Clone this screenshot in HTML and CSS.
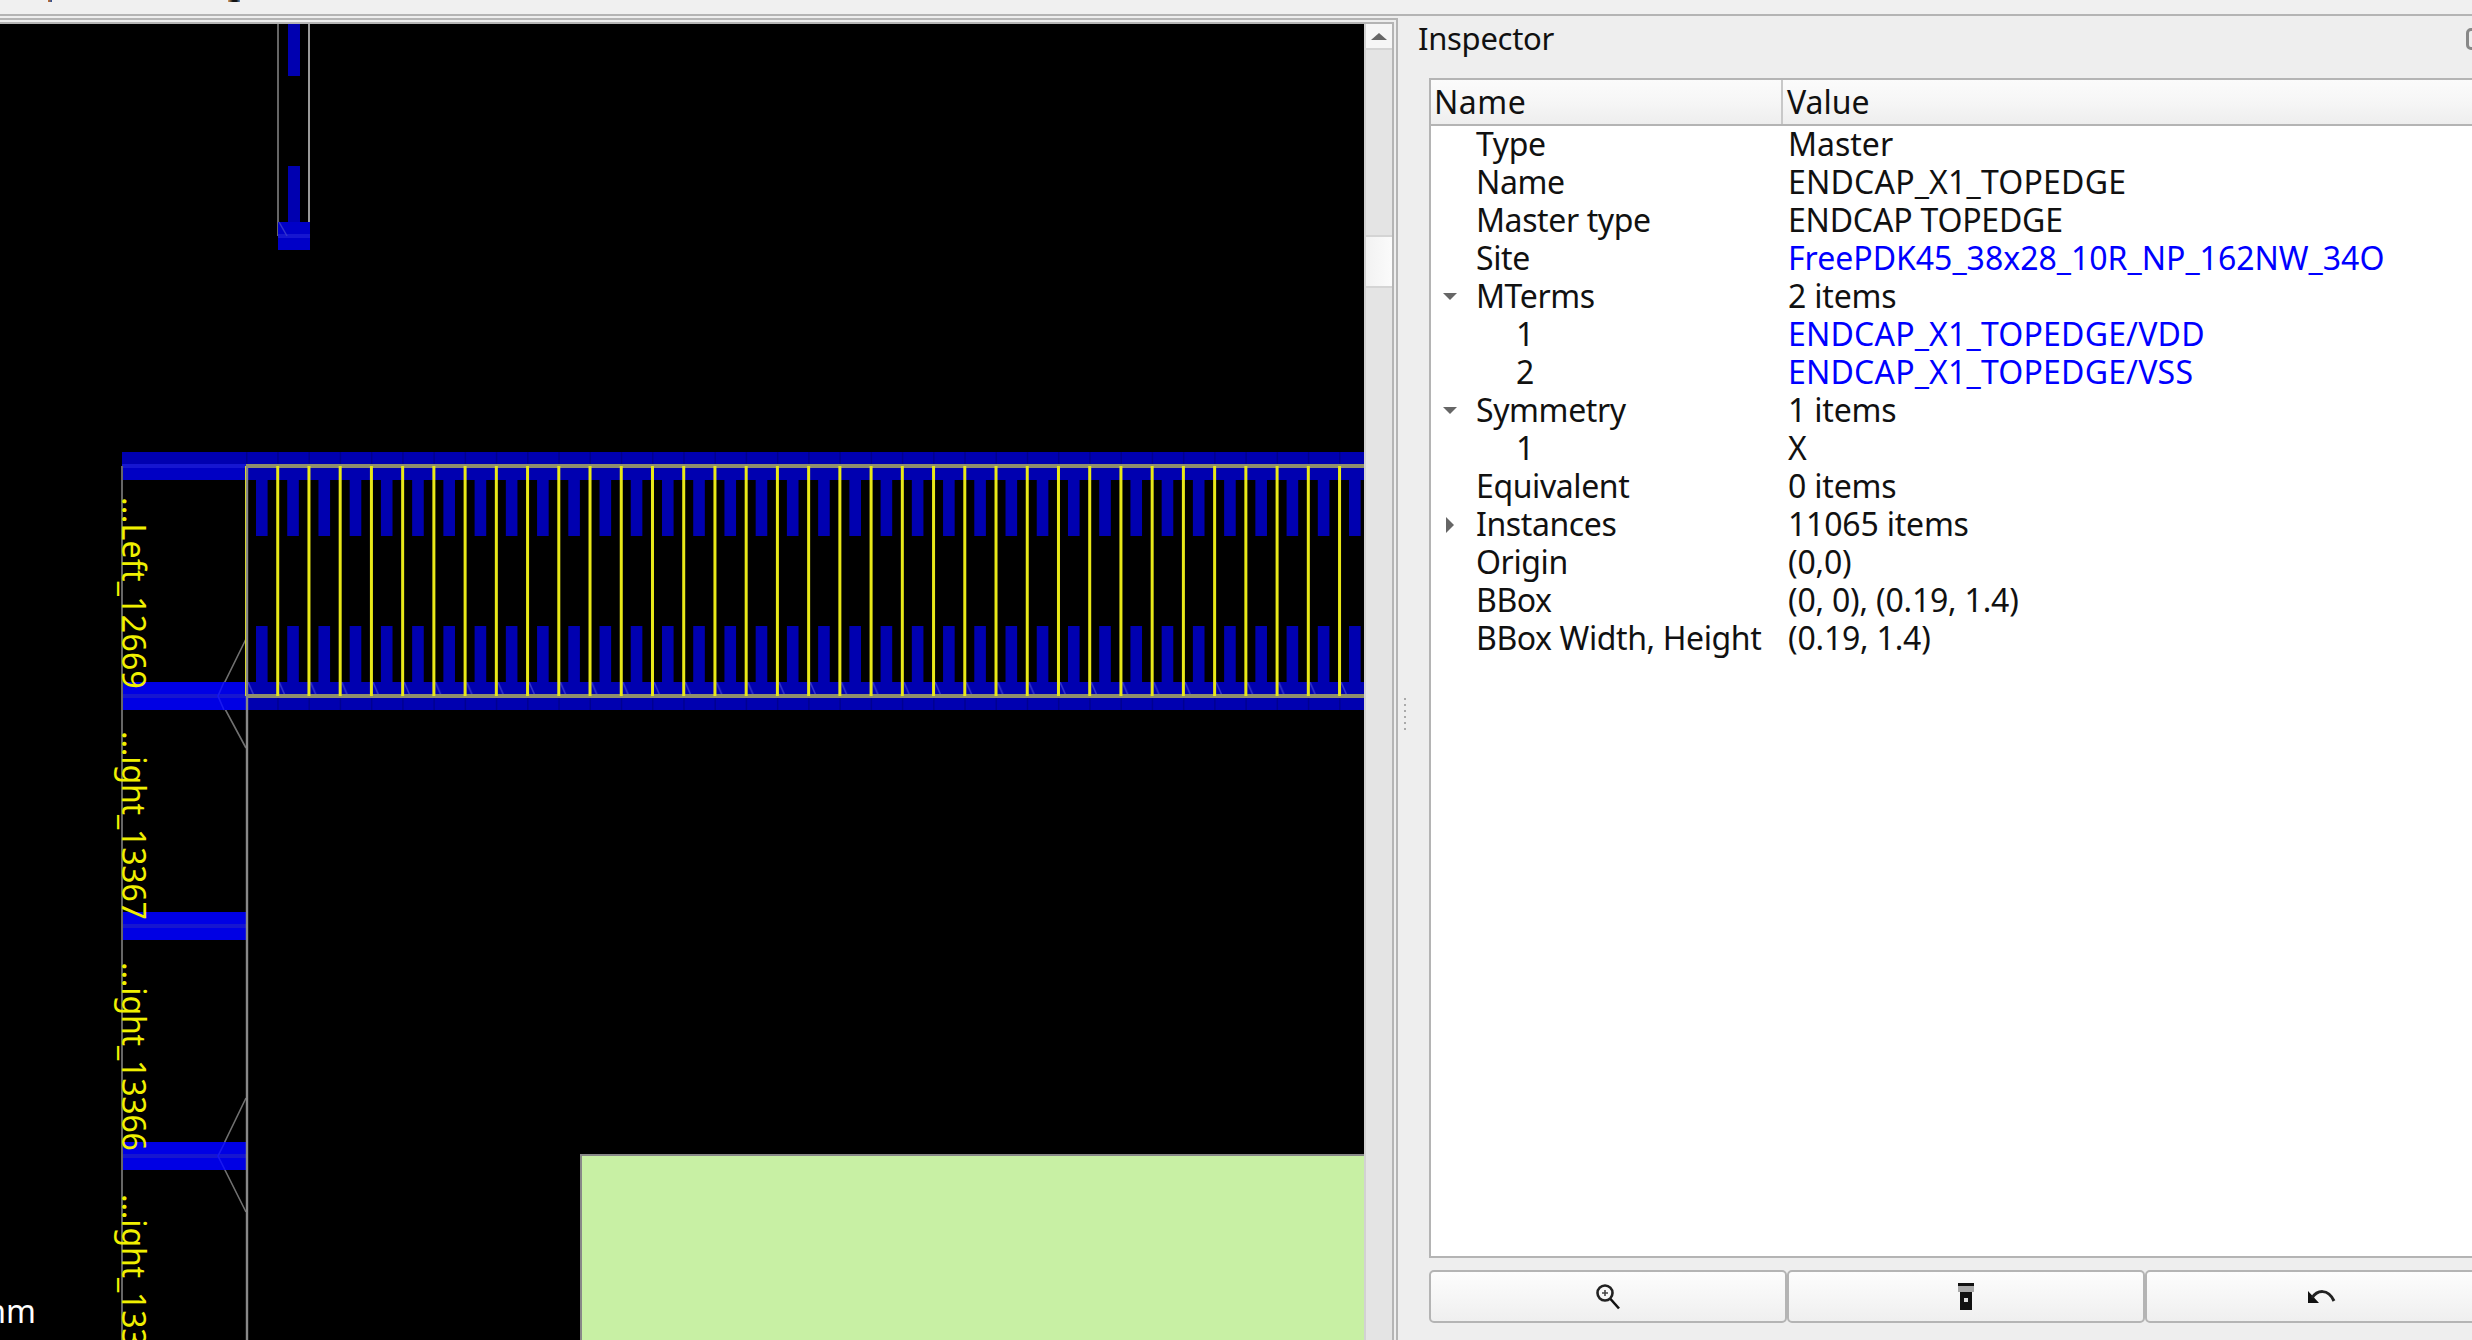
FILE: index.html
```html
<!DOCTYPE html>
<html lang="en">
<head>
  <meta charset="UTF-8">
  <title>Inspector</title>
  <link rel="stylesheet" href="styles.css">
</head>
<body>

  <div class="menu-strip">
    <span class="menu-mark mark-a"></span>
    <span class="menu-mark mark-b"></span>
  </div>

  <div class="workspace">
    <div class="view-frame">
      <div class="view-inner">
        <div class="view-core">
          <div class="canvas">
            <svg class="layout" width="1364" height="1316" viewBox="0 24 1364 1316">
              <!-- tall cell at the top -->
              <rect class="m1" x="288" y="24" width="12" height="52"/>
              <rect class="m1" x="288" y="166" width="12" height="56"/>
              <path class="outline-dark" d="M278 24V236"/>
              <path class="outline" d="M309 24V236"/>
              <rect class="m1-bright" x="278" y="222" width="32" height="28"/>
              <rect class="m1-band" x="278" y="234" width="32" height="4"/>
              <path class="faint" d="M279 222L287 236"/>

              <!-- pin marks sit under the metal -->
              <path class="pin" d="M246 639L218 696L246 748"/>
              <path class="pin" d="M246 1098L218 1156L246 1212"/>

              <!-- power rails, left stub -->
              <rect class="m1" x="122" y="452" width="1242" height="28"/>
              <rect class="m1-mid" x="122" y="466" width="124" height="14"/>
              <rect class="m1-band" x="122" y="464" width="124" height="4"/>
              <rect class="m1" x="122" y="682" width="1242" height="28"/>
              <rect class="m1-lit" x="122" y="682" width="124" height="28"/>
              <rect class="m1-band" x="122" y="694" width="124" height="4"/>
              <rect class="m1-lit" x="122" y="912" width="124" height="28"/>
              <rect class="m1-band" x="122" y="924" width="124" height="4"/>
              <rect class="m1-lit" x="122" y="1142" width="124" height="28"/>
              <rect class="m1-band" x="122" y="1154" width="124" height="4"/>
              <path class="pin-over" d="M224 682L218 696L224 710"/>
              <path class="pin-over" d="M225 1142L218 1156L225 1170"/>

              <!-- repeated endcap cells -->
              <path class="seam" d="M246 466H1364"/>
              <path class="seam" d="M246 696H1364"/>
              <path class="fingers" d="M256 508H1364"/>
              <path class="fingers" d="M256 654H1364"/>
              <rect x="246" y="682" width="1118" height="14" fill="url(#tick)"/>
              <path class="rail-line" d="M246 466H1364M246 696H1364"/>
              <path class="cell-lines" d="M245 581H1364"/>

              <defs>
                <pattern id="tick" x="247" y="682" width="31.23" height="14" patternUnits="userSpaceOnUse">
                  <path class="faint" d="M1 0L7 14"/>
                </pattern>
              </defs>

              <!-- boundary -->
              <path class="boundary-left" d="M122 466V1340"/>
              <path class="boundary" d="M247 466V1340"/>
              <rect class="macro" x="581" y="1155" width="790" height="190"/>

              <text class="label left" transform="translate(122,497) rotate(90)">...Left_12669</text>
              <text class="label" transform="translate(122,731) rotate(90)">...ight_13367</text>
              <text class="label" transform="translate(122,962) rotate(90)">...ight_13366</text>
              <text class="label" transform="translate(122,1194) rotate(90)">...ight_13365</text>
              <text class="scale" x="36" y="1323" text-anchor="end">nm</text>
            </svg>
          </div>
          <div class="scrollbar">
            <div class="scroll-btn"><span class="scroll-arrow"></span></div>
            <div class="scroll-track"></div>
            <div class="scroll-handle"></div>
            <div class="scroll-track"></div>
          </div>
        </div>
      </div>
    </div>

    <section class="inspector">
      <div class="dock-title">
        <span>Inspector</span>
        <span class="dock-icon"></span>
      </div>

      <div class="tree">
        <div class="tree-head">
          <div class="head-name">Name</div>
          <div class="head-value">Value</div>
        </div>
        <div class="row"><div class="name">Type</div><div class="value">Master</div></div>
        <div class="row"><div class="name">Name</div><div class="value wide">ENDCAP_X1_TOPEDGE</div></div>
        <div class="row"><div class="name">Master type</div><div class="value tight">ENDCAP TOPEDGE</div></div>
        <div class="row"><div class="name">Site</div><div class="value link">FreePDK45_38x28_10R_NP_162NW_34O</div></div>
        <div class="row"><div class="name"><span class="caret open"></span>MTerms</div><div class="value tight">2 items</div></div>
        <div class="row"><div class="name child">1</div><div class="value link wide">ENDCAP_X1_TOPEDGE/VDD</div></div>
        <div class="row"><div class="name child">2</div><div class="value link wide">ENDCAP_X1_TOPEDGE/VSS</div></div>
        <div class="row"><div class="name"><span class="caret open"></span>Symmetry</div><div class="value tight">1 items</div></div>
        <div class="row"><div class="name child">1</div><div class="value">X</div></div>
        <div class="row"><div class="name">Equivalent</div><div class="value tight">0 items</div></div>
        <div class="row"><div class="name"><span class="caret closed"></span>Instances</div><div class="value tight">11065 items</div></div>
        <div class="row"><div class="name">Origin</div><div class="value tight">(0,0)</div></div>
        <div class="row"><div class="name">BBox</div><div class="value tight">(0, 0), (0.19, 1.4)</div></div>
        <div class="row"><div class="name">BBox Width, Height</div><div class="value tight">(0.19, 1.4)</div></div>
      </div>

      <div class="actions">
        <button class="tool-btn" aria-label="Zoom to">
          <svg width="30" height="30" viewBox="0 0 30 30">
            <circle cx="12" cy="11" r="7.5" fill="none" stroke="#222" stroke-width="2.6"/>
            <path d="M12 8v6M9 11h6" stroke="#444" stroke-width="1.6"/>
            <path d="M17.5 17l8.5 9.5" stroke="#111" stroke-width="2.6"/>
          </svg>
        </button>
        <button class="tool-btn" aria-label="Highlight">
          <svg width="30" height="30" viewBox="0 0 30 30">
            <rect x="7" y="1" width="16" height="3" fill="#111"/>
            <rect x="7" y="4" width="16" height="6" fill="#aaa"/>
            <rect x="9" y="10" width="12" height="18" fill="#111"/>
            <rect x="13" y="16" width="4" height="4" fill="#ddd"/>
          </svg>
        </button>
        <button class="tool-btn undo" aria-label="Undo">
          <svg width="30" height="30" viewBox="0 0 30 30">
            <path d="M0 9V21H11z" fill="#111"/>
            <path d="M4 16C9 8 20 6 26 19" fill="none" stroke="#222" stroke-width="3"/>
          </svg>
        </button>
      </div>
    </section>
  </div>

</body>
</html>
```

FILE: styles.css
```css
:root {
  --panel: #eeeeee;
  --line: #b4b4b4;
  --font: "Noto Sans", sans-serif;
}
* { box-sizing: border-box; margin: 0; padding: 0; }
html, body { height: 100%; overflow: hidden; background: var(--panel); font: 32px/38px var(--font); color: #111; }
body { display: flex; flex-direction: column; }

.menu-strip { height: 16px; flex: none; background: #f0f0f0; border-bottom: 2px solid var(--line); display: flex; gap: 176px; padding-left: 48px; }
.menu-mark { height: 2px; display: block; }
.mark-a { width: 4px; background: linear-gradient(90deg, #d8701c, #1a50a8); }
.mark-b { width: 12px; background: linear-gradient(90deg, #e0a060, #111 40%, #111 70%, #6090c8); }

.workspace { flex: 1; display: flex; min-height: 0; }

/* left: layout view in two nested frames */
.view-frame { width: 1398px; flex: none; padding-top: 2px; }
.view-inner { height: 100%; border-top: 2px solid var(--line); border-right: 2px solid var(--line); padding: 2px 2px 0 0; }
.view-core { height: 100%; display: flex; border-top: 2px solid var(--line); border-right: 2px solid var(--line); }
.canvas { flex: 1; min-width: 0; background: #000; overflow: hidden; }
.layout { display: block; }
.scrollbar { width: 28px; flex: none; display: flex; flex-direction: column; background: #e4e4e4; border-left: 2px solid #d2d2d2; }
.scroll-btn { height: 26px; flex: none; background: #f6f6f6; border-bottom: 2px solid #d4d4d4; display: flex; align-items: center; justify-content: center; }
.scroll-arrow { width: 0; height: 0; border-left: 8px solid transparent; border-right: 8px solid transparent; border-bottom: 7px solid #666; }
.scroll-track { background: #e4e4e4; }
.scroll-track:nth-child(2) { height: 185px; flex: none; }
.scroll-track:last-child { flex: 1; }
.scroll-handle { height: 53px; flex: none; background: linear-gradient(90deg, #f2f2f2, #fbfbfb); border-top: 2px solid #d4d4d4; border-bottom: 2px solid #d4d4d4; }

/* right: dock */
.inspector { width: 1105px; flex: none; position: relative; padding-left: 31px; display: flex; flex-direction: column; }
.inspector::before { content: ""; position: absolute; left: 6px; top: 682px; width: 2px; height: 32px; background: repeating-linear-gradient(#aaa 0 2px, transparent 2px 6px); }
.dock-title { height: 62px; flex: none; margin-left: -11px; padding-top: 3px; font-size: 31px; letter-spacing: -.3px; }
.dock-icon { position: absolute; left: 1068px; top: 12px; width: 16px; height: 22px; border: 3px solid #888; border-radius: 5px; }
.dock-icon::after { content: ""; display: block; width: 12px; height: 12px; margin: 2px 0 0 3px; border: 2px solid #999; }

.tree { height: 1180px; flex: none; background: #fff; border: 2px solid var(--line); border-right: none; overflow: hidden; }
.tree-head { height: 46px; display: flex; padding-top: 3px; border-bottom: 2px solid var(--line); background: linear-gradient(#fbfbfb, #f6f6f6 50%, #eeeeee); }
.head-name { width: 352px; margin-top: -3px; padding: 3px 0 0 3px; border-right: 2px solid #c8c8c8; letter-spacing: .5px; }
.head-value { padding-left: 4px; }
.row { height: 38px; display: flex; white-space: nowrap; line-height: 35px; }
.name { width: 352px; padding-left: 45px; position: relative; letter-spacing: -.4px; }
.name.child { padding-left: 85px; }
.value { padding-left: 5px; }
.value.tight { letter-spacing: -.2px; }
.value.wide { letter-spacing: .2px; }
.link { color: #0000ff; }
.caret { position: absolute; left: 12px; top: 15px; width: 0; height: 0; }
.caret.open { border-left: 7px solid transparent; border-right: 7px solid transparent; border-top: 7px solid #666; }
.caret.closed { left: 15px; top: 11px; border-top: 8px solid transparent; border-bottom: 8px solid transparent; border-left: 8px solid #666; }

.actions { margin-top: 12px; height: 53px; flex: none; display: flex; }
.tool-btn { width: 358px; height: 53px; flex: none; border: 2px solid var(--line); border-radius: 5px; background: linear-gradient(#fdfdfd, #efefef); display: flex; align-items: center; justify-content: center; }
.tool-btn.undo svg { margin-left: -2px; }

/* layout view colours */
.m1 { fill: #0000b0; }
.m1-mid { fill: #0000c4; }
.m1-bright { fill: #0000c8; }
.m1-lit { fill: #0000e4; }
.m1-band { fill: #1616d0; }
.outline-dark { stroke: #666; stroke-width: 2; fill: none; }
.outline { stroke: #999; stroke-width: 2; fill: none; }
.faint { stroke: #3434cc; stroke-width: 1.5; fill: none; }
.seam { stroke: #000090; stroke-width: 28; stroke-dasharray: 1.5 29.73; fill: none; }
.fingers { stroke: #0000b0; stroke-width: 56; stroke-dasharray: 11.6 19.63; fill: none; }
.rail-line { stroke: #8f8f6c; stroke-width: 4; fill: none; }
.cell-lines { stroke: #e8e818; stroke-width: 230; stroke-dasharray: 3 28.23; fill: none; }
.boundary-left { stroke: #666; stroke-width: 2; fill: none; }
.boundary { stroke: #888; stroke-width: 2.4; fill: none; }
.pin { stroke: #707070; stroke-width: 1.6; fill: none; }
.pin-over { stroke: #1818f0; stroke-width: 1.6; fill: none; }
.macro { fill: #c8f0a4; stroke: #888; stroke-width: 2; }
.label { fill: #f0f000; font: 32px "Noto Sans", sans-serif; letter-spacing: -.15px; }
.label.left { letter-spacing: .25px; }
.scale { fill: #fff; font: 32px "Noto Sans", sans-serif; }
```
